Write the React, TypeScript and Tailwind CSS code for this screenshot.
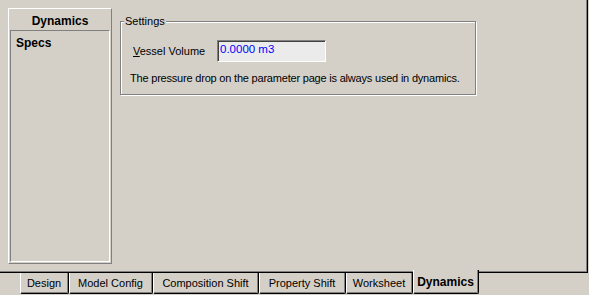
import React from "react";

const tabs = [
  { label: "Design", w: 49 },
  { label: "Model Config", w: 84 },
  { label: "Composition Shift", w: 106 },
  { label: "Property Shift", w: 87 },
  { label: "Worksheet", w: 67 },
];

export default function App() {
  return (
    <div
      className="w-[589px] h-[295px] bg-[#d4d0c8] flex flex-col text-[11px] text-black overflow-hidden"
      style={{ fontFamily: '"Liberation Sans", Arial, sans-serif' }}
    >
      {/* page panel */}
      <div className="w-[588px] h-[273px] border-r border-b border-black">
        <div className="w-full h-full border-r border-b border-[#808080] flex pl-[8px] pt-[8px]">
          {/* left nav panel */}
          <div className="w-[104px] h-[256px] border-t border-l border-white border-r border-b border-r-[#808080] border-b-[#808080] flex flex-col">
            <div className="h-[21px] flex items-center justify-center font-bold text-[12px] pt-[2px]">Dynamics</div>
            <div className="flex-1 ml-[1px] mr-[1px] mb-[1px] border-t border-l border-[#808080] border-r border-b border-r-white border-b-white pt-[5px] pl-[5px]">
              <div className="font-bold text-[12px] leading-[14px]">Specs</div>
            </div>
          </div>
          {/* settings group */}
          <div className="ml-[8px] mt-[13px] w-[356px] h-[74px] relative border border-[#808080] shadow-[inset_1px_1px_0_#fff,1px_1px_0_#fff]">
            <span className="absolute left-[3px] top-[-7px] bg-[#d4d0c8] px-[1px] leading-[13px]">Settings</span>
            <div className="flex items-center mt-[18px] ml-[12px]">
              <span className="w-[84px]"><span className="underline">V</span>essel Volume</span>
              <div className="w-[109px] h-[22px] border-t border-l border-[#808080] border-r border-b border-r-white border-b-white">
                <div className="w-full h-full border-t border-l border-[#404040] bg-[#ebebeb] text-[#0000ff] pl-[1px] leading-[13px] pt-[1px] text-[11.5px]">0.0000 m3</div>
              </div>
            </div>
            <div className="ml-[9px] mt-[10px] leading-[13px] tracking-[-0.2px]">The pressure drop on the parameter page is always used in dynamics.</div>
          </div>
        </div>
      </div>
      {/* tab strip */}
      <div className="flex pl-[20px] -mt-[3px]">
        {tabs.map((t) => (
          <div
            key={t.label}
            style={{ width: t.w }}
            className="h-[21px] mt-[3px] border-l border-white border-r border-b border-r-black border-b-black rounded-b-[2px] flex items-center justify-center"
          >
            <div className="w-full h-full border-r border-b border-[#808080] flex items-center justify-center leading-[13px] pt-[1px]">
              {t.label}
            </div>
          </div>
        ))}
        <div className="w-[66px] h-[24px] border-l border-white border-r border-b border-r-black border-b-black rounded-b-[2px] bg-[#d4d0c8] relative z-10">
          <div className="w-full h-full border-r border-b border-[#808080] flex items-center justify-center font-bold text-[12px] pt-[2px]">
            Dynamics
          </div>
        </div>
      </div>
    </div>
  );
}
